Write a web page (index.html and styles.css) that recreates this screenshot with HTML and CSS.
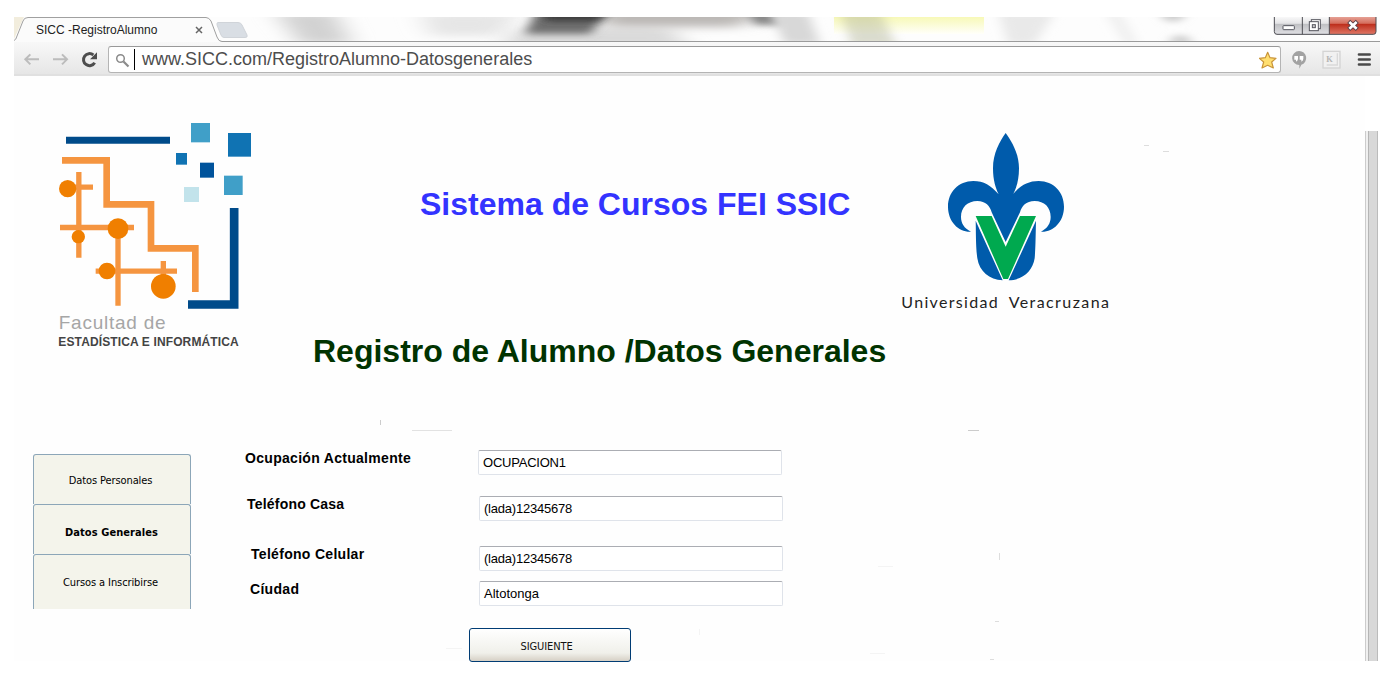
FILE: index.html
```html
<!DOCTYPE html>
<html lang="es">
<head>
<meta charset="utf-8">
<title>SICC - RegistroAlumno</title>
<link rel="stylesheet" href="styles.css">
</head>
<body>
<div class="window">
  <div class="tabstrip">
    <svg class="strip-art" viewBox="14 17 1366 25" width="1366" height="25">
      <defs>
        <filter id="soft" x="-30%" y="-100%" width="160%" height="300%"><feGaussianBlur stdDeviation="12 4"/></filter>
        <filter id="edge" x="-30%" y="-60%" width="160%" height="220%"><feGaussianBlur stdDeviation="6 3"/></filter>
        <linearGradient id="yel" x1="0" y1="0" x2="0" y2="1"><stop offset="0" stop-color="#f5f7a4"/><stop offset="1" stop-color="#fffffa"/></linearGradient>
      </defs>
      <rect x="14" y="17" width="1366" height="25" fill="#fdfdfd"/>
      <path d="M275 12H335L352 44H300Z" fill="#d2d2d2" filter="url(#soft)"/>
      <path d="M420 12H520L500 36H430Z" fill="#e6e6e6" filter="url(#soft)"/>
      <path d="M520 28H670L690 48H500Z" fill="#dadada" filter="url(#soft)"/>
      <path d="M600 8H765L740 27H605Z" fill="#bbb8b5" filter="url(#soft)"/>
      <path d="M538 6H614L590 34H525Z" fill="#707070" filter="url(#edge)"/>
      <path d="M545 8H612L596 21H545Z" fill="#383838" filter="url(#edge)"/>
      <path d="M745 8H772L785 25H755Z" fill="#858585" filter="url(#edge)"/>
      <path d="M770 12H808L820 44H785Z" fill="#d8d8d8" filter="url(#edge)"/>
      <rect x="834" y="12" width="150" height="22" fill="url(#yel)"/>
      <path d="M840 10H880L896 46H852Z" fill="#b9bca0" opacity=".5" filter="url(#edge)"/>
      <path d="M998 12H1055L1035 44H1008Z" fill="#e9e9e9" filter="url(#edge)"/>
      <path d="M1105 12H1120L1138 44H1125Z" fill="#efefef" filter="url(#edge)"/>
      <path d="M1158 10H1188L1180 21H1166ZM1168 44H1194L1186 36H1174Z" fill="#c8c8c8" filter="url(#edge)"/>
      <path d="M14 17H24L14 39Z" fill="#f2eddd"/>
      <path d="M14 41.500H1380" stroke="#9b9b9b"/>
      <path d="M218 22.500H238Q241 22.500 242 25L247 35Q248 37.500 245 37.500H224Q222 37.500 221 35L217 25Q216.500 22.500 218 22.500Z" fill="#d9dee4" stroke="#d0d4d9"/>
      <path d="M14 42V40.500Q16 40 17 36L23 21Q24 17.500 28 17.500H206Q209 17.500 211 21L217 37Q218.500 41.500 222 41.500V43H14Z" fill="#fbfbfb"/>
      <path d="M14 40.500Q16 40 17 36L23 21Q24 17.500 28 17.500H206Q209 17.500 211 21L217 37Q218.500 41.500 222 41.500" fill="none" stroke="#a0a0a0"/>
    </svg>
    <div class="strip-row">
      <span class="tab-title">SICC -RegistroAlumno</span>
      <svg class="tab-close" viewBox="0 0 8 8" width="8" height="8"><path d="M1 1L7 7M7 1L1 7" stroke="#666" stroke-width="1.500"/></svg>
      <svg class="controls" viewBox="520 51 315 57" width="105" height="19">
        <defs>
          <linearGradient id="gb" x1="0" y1="0" x2="0" y2="1"><stop offset="0" stop-color="#fcfcfc"/><stop offset=".4" stop-color="#e4e4e6"/><stop offset=".45" stop-color="#bfc0c3"/><stop offset="1" stop-color="#e0e0e4"/></linearGradient>
          <linearGradient id="rb" x1="0" y1="0" x2="0" y2="1"><stop offset="0" stop-color="#e8a99e"/><stop offset=".4" stop-color="#d46d5c"/><stop offset=".45" stop-color="#bd2e1c"/><stop offset="1" stop-color="#e07766"/></linearGradient>
        </defs>
        <path d="M524 48H689V103H532Q524 103 524 95Z" fill="url(#gb)"/>
        <path d="M689 48H829V95Q829 103 821 103H689Z" fill="url(#rb)"/>
        <path d="M524 48V95Q524 103 532 103H821Q829 103 829 95V48M608 48V103M689 48V103" fill="none" stroke="#4c4c52" stroke-width="3"/>
        <rect x="550" y="77" width="34" height="12" rx="2" fill="#fff" stroke="#55565e" stroke-width="3"/>
        <rect x="635" y="59" width="27" height="27" fill="#fff" stroke="#55565e" stroke-width="3"/>
        <rect x="629" y="65" width="27" height="27" fill="#fff" stroke="#55565e" stroke-width="3"/>
        <rect x="638" y="74" width="9" height="9" fill="#ccc" stroke="#55565e" stroke-width="3"/>
        <path d="M747 64L773 88M773 64L747 88" stroke="#584048" stroke-width="13"/>
        <path d="M749 66L771 86M771 66L749 86" stroke="#fff" stroke-width="8"/>
      </svg>
    </div>
  </div>

  <div class="toolbar">
    <svg class="nav" viewBox="42 129 282 99" width="94" height="33">
      <g fill="none" stroke="#bcbcbc" stroke-width="6"><path d="M117 178H77M91 163L76 178L91 193"/><path d="M159 178H200M186 163L201 178L186 193"/></g>
      <path d="M284 188A18 18 0 1 1 280 165" fill="none" stroke="#4d4d4d" stroke-width="9"/><path d="M291 157V178H270Z" fill="#4d4d4d"/>
    </svg>
    <div class="omnibox">
      <svg class="lens" viewBox="0 0 15 15" width="15" height="15"><circle cx="5.500" cy="5.500" r="3.800" fill="none" stroke="#8b8b8b" stroke-width="1.500"/><path d="M8.500 8.500L13.500 13.500" stroke="#8b8b8b" stroke-width="2.200"/></svg>
      <span class="caret"></span>
      <span class="url">www.SICC.com/RegistroAlumno-Datosgenerales</span>
      <svg class="star" viewBox="476 151 54 54" width="18" height="18"><path d="M502 155L509 171L527 173L514 184L519 202L502 194L485 202L490 184L477 173L495 171Z" fill="#ffdf70" stroke="#c99438" stroke-width="3.500" stroke-linejoin="round"/></svg>
    </div>
    <svg class="tools" viewBox="546 129 294 99" width="98" height="33">
      <path d="M597 153A21 21 0 0 1 604 194L598 206V195A21 21 0 1 1 597 153Z" fill="#a2a2a2"/>
      <path d="M583 168H594V176Q594 182 588 185V179H583ZM599 168H610V176Q610 182 604 185V179H599Z" fill="#fff"/>
      <rect x="669" y="154" width="51" height="50" fill="#f1f1f1" stroke="#d4d4d4" stroke-width="4"/>
      <path d="M712 160V195H680" fill="none" stroke="#d9d9d9" stroke-width="4"/>
      <text x="679" y="186" class="ext">K</text>
      <path d="M777 163.500H809M777 178.500H809M777 193.500H809" stroke="#494949" stroke-width="8" stroke-linecap="round"/>
    </svg>
  </div>

  <div class="page">
    <div class="content">
      <header class="masthead">
        <svg class="faculty" viewBox="0 0 690 750" width="230" height="250">
          <path d="M78 90.500H390" stroke="#004b8a" stroke-width="21"/>
          <path d="M444 583.500H582.500V294" fill="none" stroke="#004b8a" stroke-width="26"/>
          <rect x="453" y="39" width="57" height="58" fill="#409fc8"/>
          <rect x="564" y="69" width="69" height="71" fill="#1073b3"/>
          <rect x="408" y="129" width="33" height="35" fill="#1073b3"/>
          <rect x="480" y="158" width="42" height="45" fill="#00539c"/>
          <rect x="552" y="197" width="56" height="58" fill="#409fc8"/>
          <rect x="432" y="231" width="45" height="45" fill="#c2e3eb"/>
          <g fill="none" stroke="#f59540">
            <path d="M66 151H200V283H333V415H466V546" stroke-width="20"/>
            <path d="M116.500 186V443M80 231.500H159M60 352.500H282M234 355V587M167 483.500H411M370 453V500" stroke-width="16"/>
          </g>
          <g fill="#f07f00"><circle cx="83" cy="236" r="26"/><circle cx="234" cy="356" r="31"/><circle cx="115" cy="380" r="20"/><circle cx="201" cy="483" r="25"/><circle cx="370" cy="529" r="37"/></g>
          <text class="fac-1" x="56" y="657" textLength="321">Facultad de</text>
          <text class="fac-2" x="55" y="707" textLength="541">ESTADÍSTICA E INFORMÁTICA</text>
        </svg>
        <div class="titles">
          <h1>Sistema de Cursos FEI SSIC</h1>
          <h2>Registro de Alumno /Datos Generales</h2>
        </div>
        <svg class="university" viewBox="0 0 690 600" width="230" height="200">
          <path d="M347 39C329 64 309 100 309 145C309 180 317 205 326 223C303 196 281 183 250 183C205 183 174 217 174 260C174 306 207 337 243 335C222 325 213 309 213 291C213 262 233 243 262 243C287 243 300 258 305 277L347 366L390 277C395 258 408 243 434 243C463 243 482 262 482 291C482 309 473 325 453 335C489 337 522 306 522 260C522 217 491 183 446 183C415 183 392 196 370 221C379 205 387 180 387 145C387 100 365 64 347 39Z" fill="#005bab"/>
          <path d="M257 302L338 481C298 480 268 454 262 415C257 380 258 335 257 302ZM438 302L356 481C398 480 428 454 434 415C437 380 437 335 438 302Z" fill="#005bab"/>
          <path d="M257 288H305L347 380L390 288H438L354 477H340Z" fill="#00a94f"/>
          <text class="uv" x="34" y="564" textLength="289">Universidad</text>
          <text class="uv" x="356" y="564" textLength="301">Veracruzana</text>
        </svg>
      </header>

      <div class="body">
        <nav class="menu">
          <a class="item">Datos Personales</a>
          <a class="item current">Datos Generales</a>
          <a class="item last">Cursos a Inscribirse</a>
        </nav>
        <form class="form">
          <div class="row occupation"><label>Ocupación Actualmente</label><span class="field">OCUPACION1</span></div>
          <div class="row home"><label>Teléfono Casa</label><span class="field">(lada)12345678</span></div>
          <div class="row mobile"><label>Teléfono Celular</label><span class="field">(lada)12345678</span></div>
          <div class="row city"><label>Cíudad</label><span class="field">Altotonga</span></div>
          <button type="button" class="next">SIGUIENTE</button>
        </form>
      </div>
      <svg class="specks" viewBox="14 76 1351 600" width="1351" height="600">
        <g fill="none" stroke="#ccc"><path d="M380.500 420V425M968 430.500H979" /><path d="M412 430.500H452" stroke="#e2e2e2"/><path d="M1144 145.500H1149M1163 151.500H1169M999.500 553V560M995 621.500H999M990 659.500H994" stroke="#ddd"/><path d="M446 648.500H462M878 566.500H893M870 653.500H885M699.500 629V635" stroke="#f4f4f4"/></g>
      </svg>
    </div>
    <div class="scrollbar"></div>
  </div>
</div>
</body>
</html>
```
FILE: styles.css
```css
* { box-sizing: border-box; }

body {
  margin: 0;
  background: #fff;
  color: #000;
  font-family: "Liberation Sans", Arial, sans-serif;
}

svg { display: block; flex: none; }

.window { width: 1366px; padding-top: 17px; margin-left: 14px; }

/* Tab strip */
.tabstrip { display: grid; height: 25px; }
.strip-art, .strip-row { grid-area: 1 / 1; }
.strip-row { display: flex; align-items: flex-start; padding-left: 22px; z-index: 1; }
.tab-title { width: 159px; padding-top: 6px; font-size: 12px; line-height: 15px; color: #222; }
.tab-close { margin-top: 9px; }
.controls { margin-left: auto; margin-right: 2px; }

/* Toolbar */
.toolbar {
  display: flex;
  height: 34px;
  background: linear-gradient(#f8f8f8, #e6e6e6);
  border-bottom: 2px solid #e0e0e0;
}
.omnibox {
  display: flex;
  align-items: center;
  width: 1173px;
  height: 27px;
  margin-top: 4px;
  padding: 0 3px 0 6px;
  background: #fff;
  border: 1px solid #b4b4b4;
  border-top-color: #999;
  border-radius: 3px;
}
.nav { margin-top: 1px; }
.tools { margin-top: 1px; margin-left: 1px; }
.lens { margin-top: 1px; }
.caret { width: 1px; height: 21px; margin: 0 7px 0 4px; background: #000; }
.url { padding-bottom: 2px; font-size: 18px; line-height: 22px; color: #4d4d4d; }
.star { margin-left: auto; }
.ext { font: bold 25px "Liberation Serif", serif; fill: #b4b4b4; }

/* Page */
.page { display: flex; height: 600px; }
.content {
  position: relative;
  width: 1351px;
  background: linear-gradient(#fefefe, #fefefe) no-repeat 0 0 / 100% 585px;
}
.scrollbar {
  width: 13px;
  height: 530px;
  margin-top: 55px;
  background: linear-gradient(90deg, #ccc 1px, #f0f0f0 1px 3px, #b5b5b5 3px 4px, #d8d8d8 4px 12px, #bbb 12px);
}

.masthead { display: flex; height: 374px; padding: 34px 0 0 26px; }
.titles { width: 620px; padding-left: 42px; }
.titles h1, .titles h2 { margin: 0; font-size: 32px; line-height: 36px; white-space: nowrap; }
.titles h1 { padding: 76px 0 0 108px; color: #33f; }
.titles h2 { padding: 111px 0 0 1px; color: #030; }
.university { margin-top: 10px; }
.fac-1 { font: 57px "Liberation Sans", sans-serif; fill: #a6a6a6; }
.fac-2 { font: bold 36px "Liberation Sans", sans-serif; fill: #444; }
.uv { font: 48px Lato, sans-serif; fill: #222; }

.body { display: flex; padding-left: 19px; }
.menu {
  width: 158px;
  height: 155px;
  margin-top: 4px;
  font-family: "DejaVu Sans Condensed", "DejaVu Sans", sans-serif;
  font-stretch: condensed;
  font-size: 11px;
}
.item {
  display: flex;
  align-items: center;
  justify-content: center;
  height: 50px;
  padding: 2px 3px 0 0;
  background: #f4f4eb;
  border: 1px solid #8ca6b8;
  border-bottom: 0;
  border-radius: 3px 3px 0 0;
  letter-spacing: -.1px;
}
.current { padding: 5px 1px 0 0; font-weight: bold; letter-spacing: .08px; }
.last { height: 55px; padding-top: 0; }

.form { padding-left: 54px; }
.row { display: flex; height: 25px; }
.row label { font-size: 14px; font-weight: bold; line-height: 16px; letter-spacing: .3px; width: 233px; }
.field {
  width: 304px;
  height: 25px;
  padding-left: 4px;
  background: #fff;
  border: 1px solid #dfe3ea;
  border-top-color: #abadb3;
  border-radius: 2px;
  font-size: 13px;
  line-height: 24px;
  letter-spacing: -.22px;
}
.home { margin-top: 21px; padding-left: 2px; }
.home label { width: 232px; letter-spacing: .2px; }
.mobile { margin-top: 25px; padding-left: 6px; }
.mobile label { width: 228px; }
.city { margin-top: 10px; padding-left: 5px; }
.city label { width: 229px; }
.city .field { letter-spacing: 0; }
.next {
  display: block;
  width: 162px;
  height: 34px;
  margin: 22px 0 0 224px;
  padding: 2px 7px 0 0;
  border: 1px solid #003c74;
  border-radius: 3px;
  background: linear-gradient(#fff, #f0f0ea 75%, #d6d0c5);
  color: #111;
  font: 11px "DejaVu Sans Condensed", "DejaVu Sans", sans-serif;
  letter-spacing: -.1px;
}

.specks { position: absolute; top: 0; left: 0; pointer-events: none; }
```
